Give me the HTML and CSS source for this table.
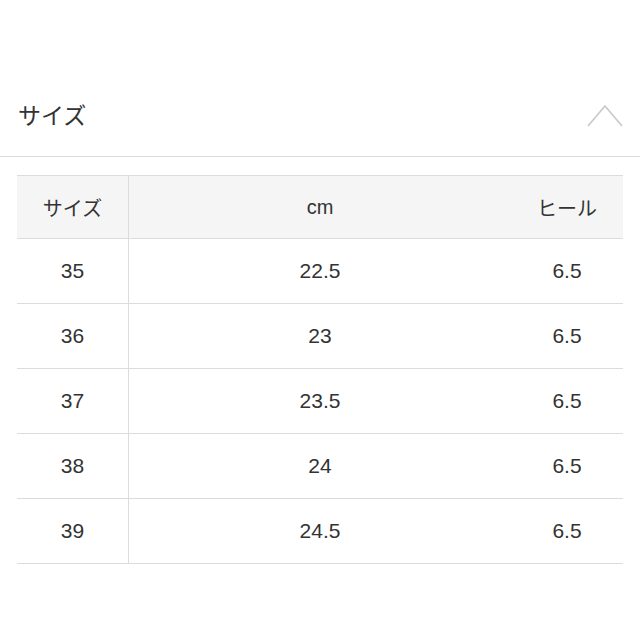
FILE: index.html
```html
<!DOCTYPE html>
<html lang="ja">
<head>
<meta charset="utf-8">
<link rel="stylesheet" href="styles.css">
</head>
<body>
<div class="section-head">
  <h2 class="section-title">サイズ</h2>
  <svg class="chevron" width="36" height="24" viewBox="0 0 36 24"><polyline points="1,22 18,2 35,22" fill="none" stroke="#c8c8c8" stroke-width="1.6"/></svg>
</div>
<table class="size-table">
  <thead>
    <tr><th class="c1">サイズ</th><th class="c2">cm</th><th class="c3">ヒール</th></tr>
  </thead>
  <tbody>
    <tr><td class="c1">35</td><td class="c2">22.5</td><td class="c3">6.5</td></tr>
    <tr><td class="c1">36</td><td class="c2">23</td><td class="c3">6.5</td></tr>
    <tr><td class="c1">37</td><td class="c2">23.5</td><td class="c3">6.5</td></tr>
    <tr><td class="c1">38</td><td class="c2">24</td><td class="c3">6.5</td></tr>
    <tr><td class="c1">39</td><td class="c2">24.5</td><td class="c3">6.5</td></tr>
  </tbody>
</table>
</body>
</html>
```
FILE: styles.css
```css
html, body {
  margin: 0;
  padding: 0;
  background: #fff;
}
body {
  font-family: "Liberation Sans", "Noto Sans CJK JP", sans-serif;
  color: #333;
  width: 640px;
}
.section-head {
  height: 157px;
  box-sizing: border-box;
  padding: 76px 17px 0 18px;
  display: flex;
  align-items: center;
  justify-content: space-between;
  border-bottom: 1px solid #dcdcdc;
}
.section-title {
  margin: 0;
  font-size: 23px;
  font-weight: normal;
  line-height: 1;
  color: #333;
}
.chevron {
  display: block;
}
.size-table {
  margin: 18px 0 0 17px;
  width: 606px;
  border-collapse: collapse;
  table-layout: fixed;
}
.size-table th,
.size-table td {
  height: 64px;
  padding: 0;
  text-align: center;
  font-weight: normal;
  border-top: 1px solid #dcdcdc;
  border-bottom: 1px solid #dcdcdc;
  font-size: 21px;
  color: #333;
}
.size-table th {
  height: 62px;
  background: #f5f5f5;
  font-size: 20px;
}
.size-table .c1 {
  width: 111px;
  border-right: 1px solid #dcdcdc;
}
.size-table .c3 {
  width: 112px;
}
```
